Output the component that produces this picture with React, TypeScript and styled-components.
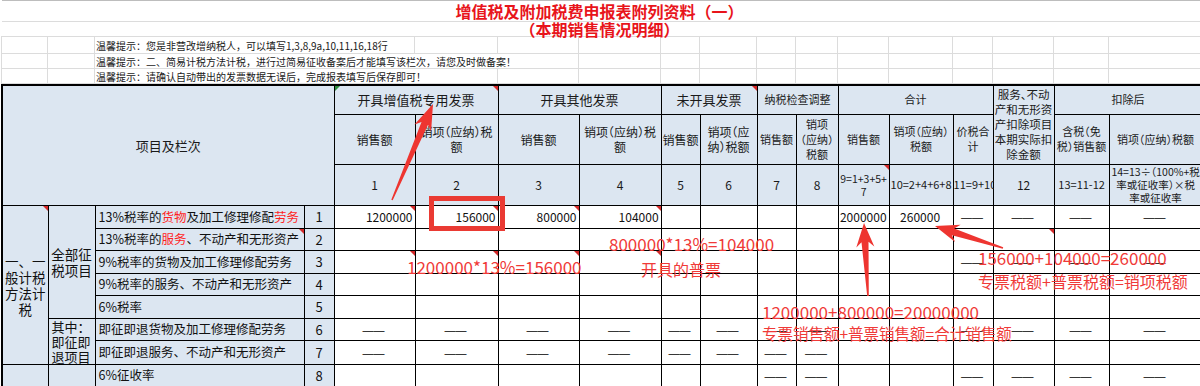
import React from 'react';
import styled, { createGlobalStyle, css } from 'styled-components';

const COLS = [46, 47, 209, 30, 81, 83, 81, 82, 39, 57, 39, 42, 51, 64, 40, 61, 55, 93];
const TABLE_WIDTH = COLS.reduce((sum, w) => sum + w, 0);
const BLUE = '#dce6f1';
const INK = '#f03a38';

const GlobalStyle = createGlobalStyle`
  html, body {
    margin: 0;
    padding: 0;
    background: #fff;
  }
  body {
    font-family: 'Noto Sans CJK SC', 'Noto Sans', sans-serif;
    color: #111;
    overflow: hidden;
  }
`;

const Page = styled.div`
  position: relative;
  width: 1200px;
  height: 386px;
  overflow: hidden;
  padding-left: 1px;
  box-sizing: border-box;
`;

/* spreadsheet rows above the form */

const Sheet = styled.table`
  width: ${TABLE_WIDTH}px;
  table-layout: fixed;
  border-collapse: collapse;
  border-top: 1px solid #bdbdbd;
`;

const SheetRow = styled.tr<{ $h: number }>`
  height: ${({ $h }) => $h}px;
`;

const GridCell = styled.td`
  border: 1px solid #dcdcdc;
  padding: 0;
`;

const TitleCell = styled.td<{ $lh: number }>`
  padding: 0 4px 0 0;
  border-bottom: 1px solid #dcdcdc;
  text-align: center;
  vertical-align: bottom;
  color: #e8141b;
  font-size: 16px;
  font-weight: 700;
  line-height: ${({ $lh }) => $lh}px;
  white-space: nowrap;
`;

const TipCell = styled.td`
  border: 1px solid #dcdcdc;
  padding: 0 0 0 1px;
  font-size: 10px;
  line-height: 13px;
  color: #1a1a1a;
  white-space: nowrap;
`;

/* the form itself */

const Grid = styled.table`
  width: ${TABLE_WIDTH}px;
  table-layout: fixed;
  border-collapse: collapse;
  border-top: 2px solid #000;
  border-left: 2px solid #000;
`;

const Row = styled.tr<{ $h: number }>`
  height: ${({ $h }) => $h}px;
`;

type MarkProps = { $mark?: boolean; $green?: boolean };

const marker = css<MarkProps>`
  ${({ $mark }) =>
    $mark &&
    css`
      &::after {
        content: '';
        position: absolute;
        top: 0;
        right: 0;
        border-top: 5px solid #d42a2a;
        border-left: 5px solid transparent;
      }
    `}
  ${({ $green }) =>
    $green &&
    css`
      &::before {
        content: '';
        position: absolute;
        top: 0;
        left: 0;
        border-top: 5px solid #2f8f3f;
        border-right: 5px solid transparent;
      }
    `}
`;

const Head = styled.th<MarkProps & { $size?: number; $lh?: number }>`
  position: relative;
  padding: 0;
  border: 1px solid #000;
  background: ${BLUE};
  font-weight: 400;
  font-size: ${({ $size = 12 }) => $size}px;
  line-height: ${({ $lh = 15 }) => $lh}px;
  text-align: center;
  white-space: nowrap;
  color: #1a1a1a;
  font-feature-settings: 'halt';
  ${marker}
`;

const Side = styled.td<MarkProps & { $left?: boolean }>`
  position: relative;
  padding: ${({ $left }) => ($left ? '0 0 0 3px' : '0')};
  border: 1px solid #000;
  background: ${BLUE};
  font-size: ${({ $left }) => ($left ? 13 : 13.5)}px;
  line-height: ${({ $left }) => ($left ? 15 : 16)}px;
  text-align: ${({ $left }) => ($left ? 'left' : 'center')};
  white-space: nowrap;
  ${marker}
`;

const Label = styled.td<MarkProps>`
  position: relative;
  padding: 0 0 0 3px;
  border: 1px solid #000;
  background: ${BLUE};
  font-size: 12.5px;
  line-height: 16px;
  white-space: nowrap;
  overflow: hidden;
  ${marker}
`;

const LineNo = styled.td`
  padding: 0;
  border: 1px solid #000;
  background: ${BLUE};
  font-size: 13px;
  text-align: center;
`;

const Cell = styled.td<MarkProps & { $align: 'right' | 'center' }>`
  position: relative;
  padding: 0 2px 0 0;
  border: 1px solid #000;
  background: #fff;
  font-size: 12px;
  line-height: 16px;
  text-align: ${({ $align }) => $align};
  white-space: nowrap;
  ${marker}
`;

const Dash = styled.span`
  font-family: 'Liberation Sans', sans-serif;
  font-size: 11px;
  color: #000;
`;

const Red = styled.span`
  color: #ff1f1f;
`;

/* hand-drawn notes on top of the screenshot */

const Marks = styled.svg`
  position: absolute;
  left: 0;
  top: 0;
  pointer-events: none;
`;

const Box = styled.div`
  position: absolute;
  left: 429px;
  top: 196px;
  width: 76px;
  height: 35px;
  box-sizing: border-box;
  border: 5px solid #ea3a33;
`;

const Note = styled.div<{ $x: number; $y: number; $size: number }>`
  position: absolute;
  left: ${({ $x }) => $x}px;
  top: ${({ $y }) => $y}px;
  font-size: ${({ $size }) => $size}px;
  line-height: 1;
  color: ${INK};
  white-space: nowrap;
`;

const arrow = (x1: number, y1: number, x2: number, y2: number, head = 22, wing = 9) => {
  const len = Math.hypot(x2 - x1, y2 - y1);
  const dx = (x2 - x1) / len;
  const dy = (y2 - y1) / len;
  const nx = -dy;
  const ny = dx;
  const bx = x2 - dx * head;
  const by = y2 - dy * head;
  const pts = [
    [x1 + nx * 0.8, y1 + ny * 0.8],
    [bx + dx * 3 + nx * 3.5, by + dy * 3 + ny * 3.5],
    [bx - dx * 2 + nx * wing, by - dy * 2 + ny * wing],
    [x2, y2],
    [bx - dx * 2 - nx * wing, by - dy * 2 - ny * wing],
    [bx + dx * 3 - nx * 3.5, by + dy * 3 - ny * 3.5],
    [x1 - nx * 0.8, y1 - ny * 0.8],
  ];
  return pts.map((p) => p.map((v) => v.toFixed(1)).join(',')).join(' ');
};

type RowDef = {
  no: number;
  name: React.ReactNode;
  cells: string[];
  marks?: number[];
  nameMark?: boolean;
  h: number;
};

const E = (n: number) => Array.from({ length: n }, () => '');
const D = (n: number) => Array.from({ length: n }, () => '-');

const rows: RowDef[] = [
  {
    no: 1,
    name: (
      <>
        13%税率的<Red>货物</Red>及加工修理修配<Red>劳务</Red>
      </>
    ),
    cells: ['1200000', '156000', '800000', '104000', '', '', '', '', '2000000', '^260000', ...D(4)],
    marks: [0, 1, 2, 3],
    h: 23,
  },
  {
    no: 2,
    name: (
      <>
        13%税率的<Red>服务</Red>、不动产和无形资产
      </>
    ),
    cells: E(14),
    marks: [11],
    nameMark: true,
    h: 22,
  },
  { no: 3, name: '9%税率的货物及加工修理修配劳务', cells: [...E(10), ...D(4)], marks: [0, 1, 2, 3], h: 23 },
  { no: 4, name: '9%税率的服务、不动产和无形资产', cells: E(14), h: 22 },
  { no: 5, name: '6%税率', cells: E(14), h: 23 },
  { no: 6, name: '即征即退货物及加工修理修配劳务', cells: [...D(8), '', '', ...D(4)], h: 22 },
  { no: 7, name: '即征即退服务、不动产和无形资产', cells: [...D(8), ...E(6)], h: 23 },
  { no: 8, name: '6%征收率', cells: [...E(6), '-', '-', '', '', ...D(4)], h: 22 },
  { no: 9, name: '', cells: E(14), h: 22 },
];

function renderCell(value: string, i: number, marked: boolean) {
  if (value === '-') {
    return (
      <Cell key={i} $align="center" $mark={marked}>
        <Dash>——</Dash>
      </Cell>
    );
  }
  const centered = value.startsWith('^');
  return (
    <Cell key={i} $align={centered ? 'center' : 'right'} $mark={marked}>
      {centered ? value.slice(1) : value}
    </Cell>
  );
}

function TopSheet() {
  const grid = (from: number) => COLS.slice(from).map((_, i) => <GridCell key={from + i} />);
  return (
    <Sheet>
      <colgroup>
        {COLS.map((w, i) => (
          <col key={i} style={{ width: w }} />
        ))}
      </colgroup>
      <tbody>
        <SheetRow $h={21}>
          <TitleCell colSpan={COLS.length} $lh={19}>
            增值税及附加税费申报表附列资料（一）
          </TitleCell>
        </SheetRow>
        <SheetRow $h={15}>
          <TitleCell colSpan={COLS.length} $lh={13}>
            （本期销售情况明细）
          </TitleCell>
        </SheetRow>
        <SheetRow $h={17}>
          <GridCell />
          <GridCell />
          <TipCell colSpan={3}>温馨提示：您是非营改增纳税人，可以填写1,3,8,9a,10,11,16,18行</TipCell>
          {grid(5)}
        </SheetRow>
        <SheetRow $h={15}>
          <GridCell />
          <GridCell />
          <TipCell colSpan={5}>温馨提示：二、简易计税方法计税，进行过简易征收备案后才能填写该栏次，请您及时做备案！</TipCell>
          {grid(7)}
        </SheetRow>
        <SheetRow $h={15}>
          <GridCell />
          <GridCell />
          <TipCell colSpan={4}>温馨提示：请确认自动带出的发票数据无误后，完成报表填写后保存即可！</TipCell>
          {grid(6)}
        </SheetRow>
      </tbody>
    </Sheet>
  );
}

function SalesForm() {
  return (
    <Grid>
      <colgroup>
        {COLS.map((w, i) => (
          <col key={i} style={{ width: w }} />
        ))}
      </colgroup>
      <thead>
        <Row $h={29}>
          <Head colSpan={4} rowSpan={3} $size={13}>
            项目及栏次
          </Head>
          <Head colSpan={2} $size={13} $green $mark>
            开具增值税专用发票
          </Head>
          <Head colSpan={2} $size={13}>
            开具其他发票
          </Head>
          <Head colSpan={2} $size={13} $mark>
            未开具发票
          </Head>
          <Head colSpan={2} $size={11}>
            纳税检查调整
          </Head>
          <Head colSpan={3} $size={11}>
            合计
          </Head>
          <Head rowSpan={2} $size={11.5}>
            服务、不动
            <br />
            产和无形资
            <br />
            产扣除项目
            <br />
            本期实际扣
            <br />
            除金额
          </Head>
          <Head colSpan={2} $size={11}>
            扣除后
          </Head>
        </Row>
        <Row $h={50}>
          <Head>销售额</Head>
          <Head>
            销项（应纳）税
            <br />额
          </Head>
          <Head>销售额</Head>
          <Head>
            销项（应纳）税
            <br />额
          </Head>
          <Head>销售额</Head>
          <Head>
            销项（应
            <br />
            纳）税额
          </Head>
          <Head $size={11}>销售额</Head>
          <Head $size={11}>
            销项
            <br />
            （应纳）
            <br />
            税额
          </Head>
          <Head $size={11}>销售额</Head>
          <Head $size={11}>
            销项（应纳）
            <br />
            税额
          </Head>
          <Head $size={11}>
            价税合
            <br />计
          </Head>
          <Head $size={11}>
            含税（免
            <br />
            税）销售额
          </Head>
          <Head $size={11}>销项（应纳）税额</Head>
        </Row>
        <Row $h={41}>
          {['1', '2', '3', '4', '5', '6', '7', '8'].map((n) => (
            <Head key={n}>{n}</Head>
          ))}
          <Head $size={10.5} $lh={13} $mark>
            9=1+3+5+
            <br />7
          </Head>
          <Head $size={11}>10=2+4+6+8</Head>
          <Head $size={11}>11=9+10</Head>
          <Head>12</Head>
          <Head $size={11}>13=11-12</Head>
          <Head $size={10.5} $lh={13}>
            14=13÷（100%+税
            <br />
            率或征收率）×税
            <br />
            率或征收率
          </Head>
        </Row>
      </thead>
      <tbody>
        {rows.map((r, idx) => (
          <Row key={r.no} $h={r.h}>
            {idx === 0 && (
              <>
                <Side rowSpan={7} $mark>
                  一、一
                  <br />
                  般计税
                  <br />
                  方法计
                  <br />税
                </Side>
                <Side rowSpan={5}>
                  全部征
                  <br />
                  税项目
                </Side>
              </>
            )}
            {idx === 5 && (
              <Side rowSpan={2} $left>
                其中：
                <br />
                即征即
                <br />
                退项目
              </Side>
            )}
            {idx === 7 && (
              <>
                <Side rowSpan={2} />
                <Side rowSpan={2} />
              </>
            )}
            <Label $mark={r.nameMark}>{r.name}</Label>
            <LineNo>{r.no}</LineNo>
            {r.cells.map((v, i) => renderCell(v, i, !!r.marks?.includes(i)))}
          </Row>
        ))}
      </tbody>
    </Grid>
  );
}

export default function App() {
  return (
    <>
      <GlobalStyle />
      <Page>
        <TopSheet />
        <SalesForm />
        <Box />
        <Marks width={1200} height={386} viewBox="0 0 1200 386">
          <polygon points={arrow(392, 200, 433, 104, 24, 9)} fill="#ee3530" />
          <polygon points={arrow(868, 296, 864, 223, 22, 9)} fill="#ee3530" />
          <polygon points={arrow(1003, 248, 935, 226, 22, 9)} fill="#ee3530" />
        </Marks>
        <Note $x={609} $y={235} $size={17}>
          800000*13%=104000
        </Note>
        <Note $x={407} $y={258} $size={17}>
          1200000*13%=156000
        </Note>
        <Note $x={641} $y={261} $size={16}>
          开具的普票
        </Note>
        <Note $x={978} $y={249} $size={17}>
          156000+104000=260000
        </Note>
        <Note $x={978} $y={273} $size={16}>
          专票税额+普票税额=销项税额
        </Note>
        <Note $x={762} $y={303} $size={17}>
          1200000+800000=20000000
        </Note>
        <Note $x={762} $y={326} $size={15.5}>
          专票销售额+普票销售额=合计销售额
        </Note>
      </Page>
    </>
  );
}
